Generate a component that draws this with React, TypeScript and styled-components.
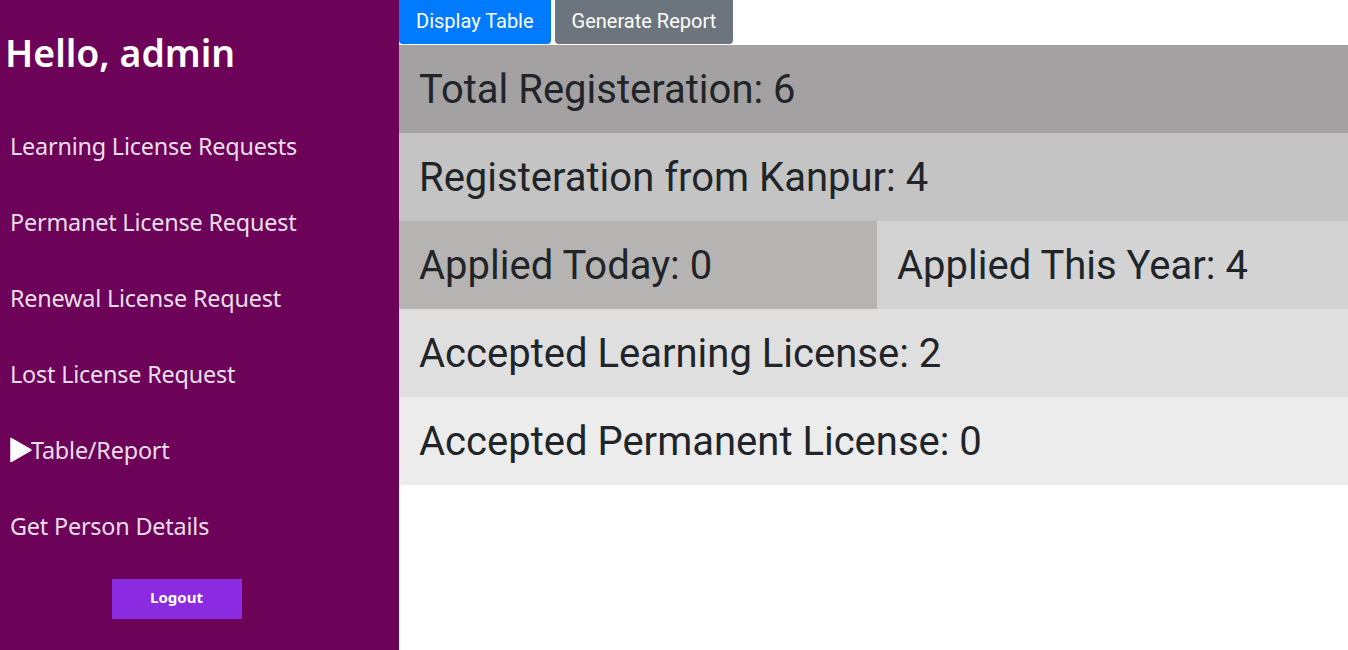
import React from "react";
import styled, { createGlobalStyle } from "styled-components";

const Global = createGlobalStyle`
  html, body { margin: 0; padding: 0; background: #fff; }
  * { box-sizing: border-box; }
`;

const Page = styled.div`
  display: flex;
  width: 1348px;
  height: 650px;
  overflow: hidden;
`;

const Sidebar = styled.nav`
  width: 399px;
  flex: none;
  background: #6d0359;
  display: flex;
  flex-direction: column;
  font-family: "Noto Sans", "Open Sans", sans-serif;
`;

const Greeting = styled.h1`
  margin: 31px 0 0 5px;
  font-size: 37.4px;
  line-height: 44px;
  font-weight: 600;
  color: #fff;
`;

const NavList = styled.ul`
  list-style: none;
  margin: 55px 0 0 0;
  padding: 0;
  display: flex;
  flex-direction: column;
  gap: 44px;
`;

const NavItem = styled.li`
  margin-left: 10px;
  font-size: 23.4px;
  line-height: 32px;
  color: #e8dfe8;
  display: flex;
  align-items: center;
  letter-spacing: -0.2px;
`;

const Arrow = styled.svg`
  width: 22px;
  height: 26px;
  margin-right: -1px;
`;

const LogoutWrap = styled.div`
  display: flex;
  justify-content: center;
  margin-top: 37px;
  padding-right: 46px;
`;

const LogoutButton = styled.button`
  width: 130px;
  height: 40px;
  border: none;
  background: #8a2be2;
  color: #fff;
  font-family: "Noto Sans", sans-serif;
  font-weight: 700;
  font-size: 15px;
  padding: 0 0 4px 0;
`;

const Main = styled.main`
  flex: 1;
  display: flex;
  flex-direction: column;
  font-family: Roboto, sans-serif;
`;

const Toolbar = styled.div`
  display: flex;
  gap: 4px;
  height: 45px;
`;

const ToolButton = styled.button<{ $bg: string }>`
  height: 44px;
  border: none;
  border-radius: 0 0 4px 4px;
  background: ${(p) => p.$bg};
  color: #fff;
  font-family: Roboto, sans-serif;
  font-size: 20px;
  padding: 0 17px 2px;
`;

const Row = styled.div<{ $bg?: string }>`
  height: 88px;
  display: flex;
  align-items: center;
  padding-left: 20px;
  background: ${(p) => p.$bg || "transparent"};
  font-size: 40px;
  color: #212529;
`;

const SplitRow = styled.div`
  display: grid;
  grid-template-columns: 478px 1fr;
`;

export default function App() {
  const items = [
    "Learning License Requests",
    "Permanet License Request",
    "Renewal License Request",
    "Lost License Request",
    "Table/Report",
    "Get Person Details",
  ];
  return (
    <>
      <Global />
      <Page>
        <Sidebar>
          <Greeting>Hello, admin</Greeting>
          <NavList>
            {items.map((t) => (
              <NavItem key={t}>
                {t === "Table/Report" && (
                  <Arrow viewBox="0 0 22 26">
                    <path d="M1 1.5 L21 13 L1 24.5 Z" fill="#fff" stroke="#fff" strokeWidth="1.5" strokeLinejoin="round" />
                  </Arrow>
                )}
                {t}
              </NavItem>
            ))}
          </NavList>
          <LogoutWrap>
            <LogoutButton>Logout</LogoutButton>
          </LogoutWrap>
        </Sidebar>
        <Main>
          <Toolbar>
            <ToolButton $bg="#007bff">Display Table</ToolButton>
            <ToolButton $bg="#6c757d">Generate Report</ToolButton>
          </Toolbar>
          <Row $bg="#a3a1a1">Total Registeration: 6</Row>
          <Row $bg="#c4c4c4">Registeration from Kanpur: 4</Row>
          <SplitRow>
            <Row $bg="#b5b4b2">Applied Today: 0</Row>
            <Row $bg="#d3d3d3">Applied This Year: 4</Row>
          </SplitRow>
          <Row $bg="#e0dfe0">Accepted Learning License: 2</Row>
          <Row $bg="#ececec">Accepted Permanent License: 0</Row>
        </Main>
      </Page>
    </>
  );
}
